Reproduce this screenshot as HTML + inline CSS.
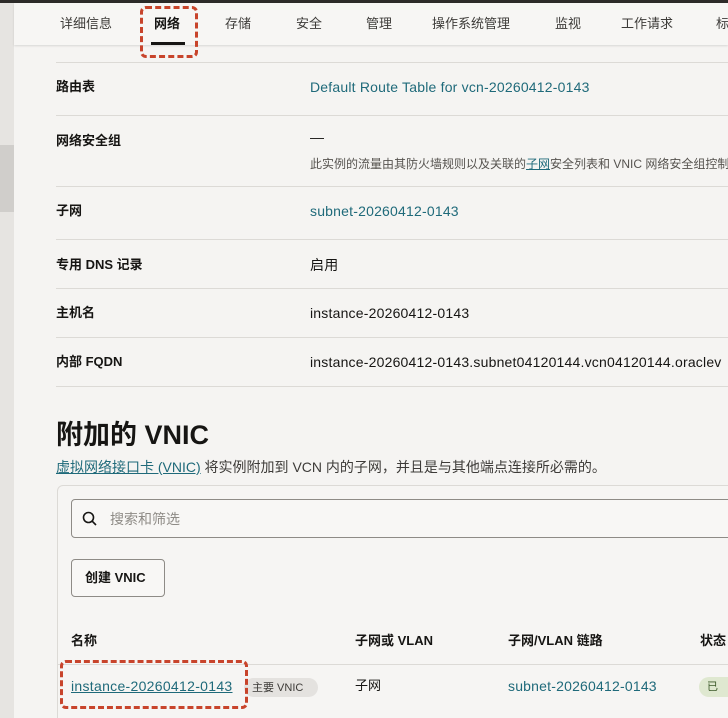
<!DOCTYPE html>
<html><head><meta charset="utf-8"><style>
*{margin:0;padding:0;box-sizing:border-box}
html,body{width:728px;height:718px;overflow:hidden}
body{background:#f5f4f2;font-family:"Liberation Sans","Noto Sans CJK SC",sans-serif;color:#161513}
#w{position:relative;width:728px;height:718px;overflow:hidden}
.a{position:absolute;white-space:nowrap;line-height:18px}
.hr{position:absolute;left:56px;right:0;height:1px;background:#dcdad6}
.lab{font-size:13px;font-weight:bold;left:56px}
.val{font-size:14px;left:310px;letter-spacing:.2px}
.lnk{color:#1f6a7a}
.tab{top:15px;font-size:13px;color:#3d3b38}
.dash{position:absolute;border:3px dashed #c8442b;border-radius:6px}
</style></head><body><div id="w">
<div class="a" style="left:0;top:0;width:728px;height:3px;background:#2d2b29"></div>
<div class="a" style="left:0;top:3px;width:14px;height:715px;background:#e6e4e1"></div>
<div class="a" style="left:0;top:145px;width:14px;height:67px;background:#d0cecb"></div>
<div class="a" style="left:14px;top:3px;width:714px;height:42px;background:#f7f6f4;box-shadow:0 1px 2px rgba(0,0,0,.12)"></div>
<div class="a tab" style="left:60px">详细信息</div>
<div class="a tab" style="left:154px;font-weight:bold;color:#161513">网络</div>
<div class="a" style="left:151px;top:42px;width:34px;height:3px;background:#161513"></div>
<div class="a tab" style="left:225px">存储</div>
<div class="a tab" style="left:296px">安全</div>
<div class="a tab" style="left:366px">管理</div>
<div class="a tab" style="left:432px">操作系统管理</div>
<div class="a tab" style="left:555px">监视</div>
<div class="a tab" style="left:621px">工作请求</div>
<div class="a tab" style="left:716px">标</div>
<div class="dash" style="left:140px;top:6px;width:58px;height:52px"></div>

<div class="hr" style="top:62px"></div>
<div class="a lab" style="top:78px">路由表</div>
<div class="a val lnk" style="top:78px">Default Route Table for vcn-20260412-0143</div>
<div class="hr" style="top:115px"></div>
<div class="a lab" style="top:132px">网络安全组</div>
<div class="a val" style="top:128px">—</div>
<div class="a" style="left:310px;top:155px;font-size:12px;color:#56534f">此实例的流量由其防火墙规则以及关联的<span style="color:#1f6a7a;text-decoration:underline">子网</span>安全列表和 VNIC 网络安全组控制。</div>
<div class="hr" style="top:186px"></div>
<div class="a lab" style="top:202px">子网</div>
<div class="a val lnk" style="top:202px">subnet-20260412-0143</div>
<div class="hr" style="top:239px"></div>
<div class="a lab" style="top:256px">专用 DNS 记录</div>
<div class="a val" style="top:256px">启用</div>
<div class="hr" style="top:288px"></div>
<div class="a lab" style="top:304px">主机名</div>
<div class="a val" style="top:304px">instance-20260412-0143</div>
<div class="hr" style="top:337px"></div>
<div class="a lab" style="top:353px">内部 FQDN</div>
<div class="a val" style="top:353px">instance-20260412-0143.subnet04120144.vcn04120144.oraclev</div>
<div class="hr" style="top:386px"></div>

<div class="a" style="left:56px;top:419px;font-size:27px;font-weight:bold;line-height:32px">附加的 VNIC</div>
<div class="a" style="left:56px;top:458px;font-size:14px;color:#3d3b38"><span style="color:#1f6a7a;text-decoration:underline">虚拟网络接口卡 (VNIC)</span> 将实例附加到 VCN 内的子网，并且是与其他端点连接所必需的。</div>

<div class="a" style="left:57px;top:485px;width:680px;height:240px;border:1px solid #dcdad6;border-radius:6px;background:#f6f5f3"></div>
<div class="a" style="left:71px;top:499px;width:670px;height:39px;border:1px solid #8e8b86;border-radius:4px;background:#f8f7f5"></div>
<svg class="a" style="left:82px;top:511px" width="16" height="16" viewBox="0 0 16 16"><circle cx="6.5" cy="6.5" r="5" fill="none" stroke="#161513" stroke-width="1.6"/><line x1="10.2" y1="10.2" x2="14" y2="14" stroke="#161513" stroke-width="1.6"/></svg>
<div class="a" style="left:110px;top:510px;font-size:14px;color:#8e8b86">搜索和筛选</div>
<div class="a" style="left:71px;top:559px;width:94px;height:38px;border:1px solid #8e8b86;border-radius:4px;background:#f8f7f5"></div>
<div class="a" style="left:85px;top:569px;font-size:13px;font-weight:bold">创建 VNIC</div>

<div class="a" style="left:71px;top:632px;font-size:13px;font-weight:bold">名称</div>
<div class="a" style="left:355px;top:632px;font-size:13px;font-weight:bold">子网或 VLAN</div>
<div class="a" style="left:508px;top:632px;font-size:13px;font-weight:bold">子网/VLAN 链路</div>
<div class="a" style="left:700px;top:632px;font-size:13px;font-weight:bold">状态</div>
<div class="a" style="left:57px;top:664px;width:671px;height:1px;background:#dcdad6"></div>
<div class="a" style="left:71px;top:677px;font-size:14px;letter-spacing:.3px;color:#1f6a7a;text-decoration:underline">instance-20260412-0143</div>
<div class="a" style="left:244px;top:678px;width:74px;height:19px;border-radius:10px;background:#e4e2df"></div>
<div class="a" style="left:252px;top:679px;font-size:11px;color:#3d3b38">主要 VNIC</div>
<div class="a" style="left:355px;top:677px;font-size:13px">子网</div>
<div class="a lnk" style="left:508px;top:677px;font-size:14px;letter-spacing:.2px">subnet-20260412-0143</div>
<div class="a" style="left:699px;top:677px;width:29px;height:20px;border-radius:10px 0 0 10px;background:#dfe8d0"></div>
<div class="a" style="left:707px;top:678px;font-size:11px;color:#3d5a2a">已</div>
<div class="dash" style="left:60px;top:660px;width:188px;height:49px"></div>
</div></body></html>
